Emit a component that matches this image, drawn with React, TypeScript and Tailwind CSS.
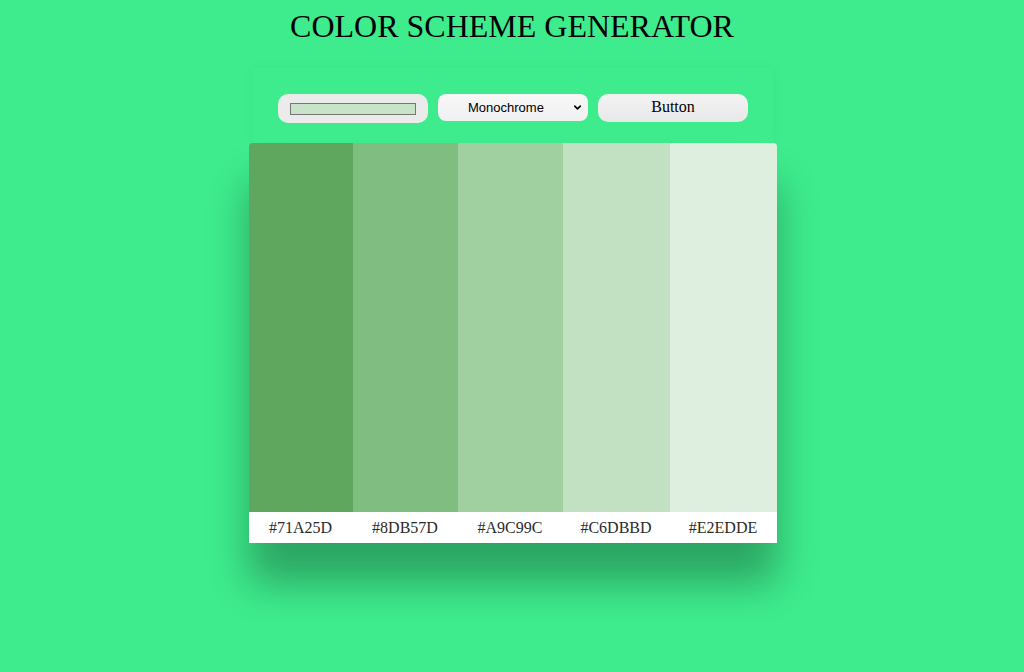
import { ChevronDown } from 'lucide-react'

const colors = [
  { hex: '#71A25D', bg: 'bg-[#5fa75f]', w: 'w-[104px]' },
  { hex: '#8DB57D', bg: 'bg-[#7fbd80]', w: 'w-[105px]' },
  { hex: '#A9C99C', bg: 'bg-[#a0d0a0]', w: 'w-[105px]' },
  { hex: '#C6DBBD', bg: 'bg-[#c2e0c2]', w: 'w-[107px]' },
  { hex: '#E2EDDE', bg: 'bg-[#dfefdf]', w: 'w-[107px]' },
]

export default function App() {
  return (
    <div
      className="min-h-[672px] w-full bg-[#3eec8d] flex flex-col items-center"
      style={{ fontFamily: '"Liberation Serif", serif' }}
    >
      <h1 className="mt-[8px] text-[32px] leading-[37px] text-black">
        COLOR SCHEME GENERATOR
      </h1>

      {/* Controls */}
      <div className="mt-[23px] ml-[2px] w-[520px] h-[75px] shadow-[0_0_12px_rgba(0,0,0,0.04)] flex items-start justify-center gap-[10px] pt-[26px]">
        <div className="w-[150px] h-[29px] rounded-[10px] bg-[#ebebeb] flex items-center justify-center">
          <div className="w-[126px] h-[12px] bg-[#c8e3c8] border border-[#777]" />
        </div>
        <div className="relative w-[150px] h-[27px] rounded-[8px] bg-gradient-to-b from-[#f8f8f8] to-[#f0f0f0] flex items-center">
          <span
            className="ml-[30px] text-[13px] text-black"
            style={{ fontFamily: '"Liberation Sans", Arial, sans-serif' }}
          >
            Monochrome
          </span>
          <ChevronDown className="absolute right-[5px] top-[8px] w-[11px] h-[11px] text-black" strokeWidth={3.5} />
        </div>
        <button className="w-[150px] h-[28px] rounded-[10px] bg-gradient-to-b from-[#f3f3f3] to-[#e8e8e8] text-[16px] text-black leading-[24px] pb-[2px]">
          Button
        </button>
      </div>

      {/* Palette */}
      <div className="flex ml-[1px] shadow-[0_40px_40px_rgba(0,0,0,0.3)] rounded-t-[4px] overflow-hidden">
        {colors.map((c) => (
          <div key={c.hex} className={`${c.w} flex flex-col`}>
            <div className={`${c.bg} h-[369px]`} />
            <div className="h-[31px] bg-white flex items-center justify-center text-[16px] text-[#2a2a2a]">
              {c.hex}
            </div>
          </div>
        ))}
      </div>
    </div>
  )
}
